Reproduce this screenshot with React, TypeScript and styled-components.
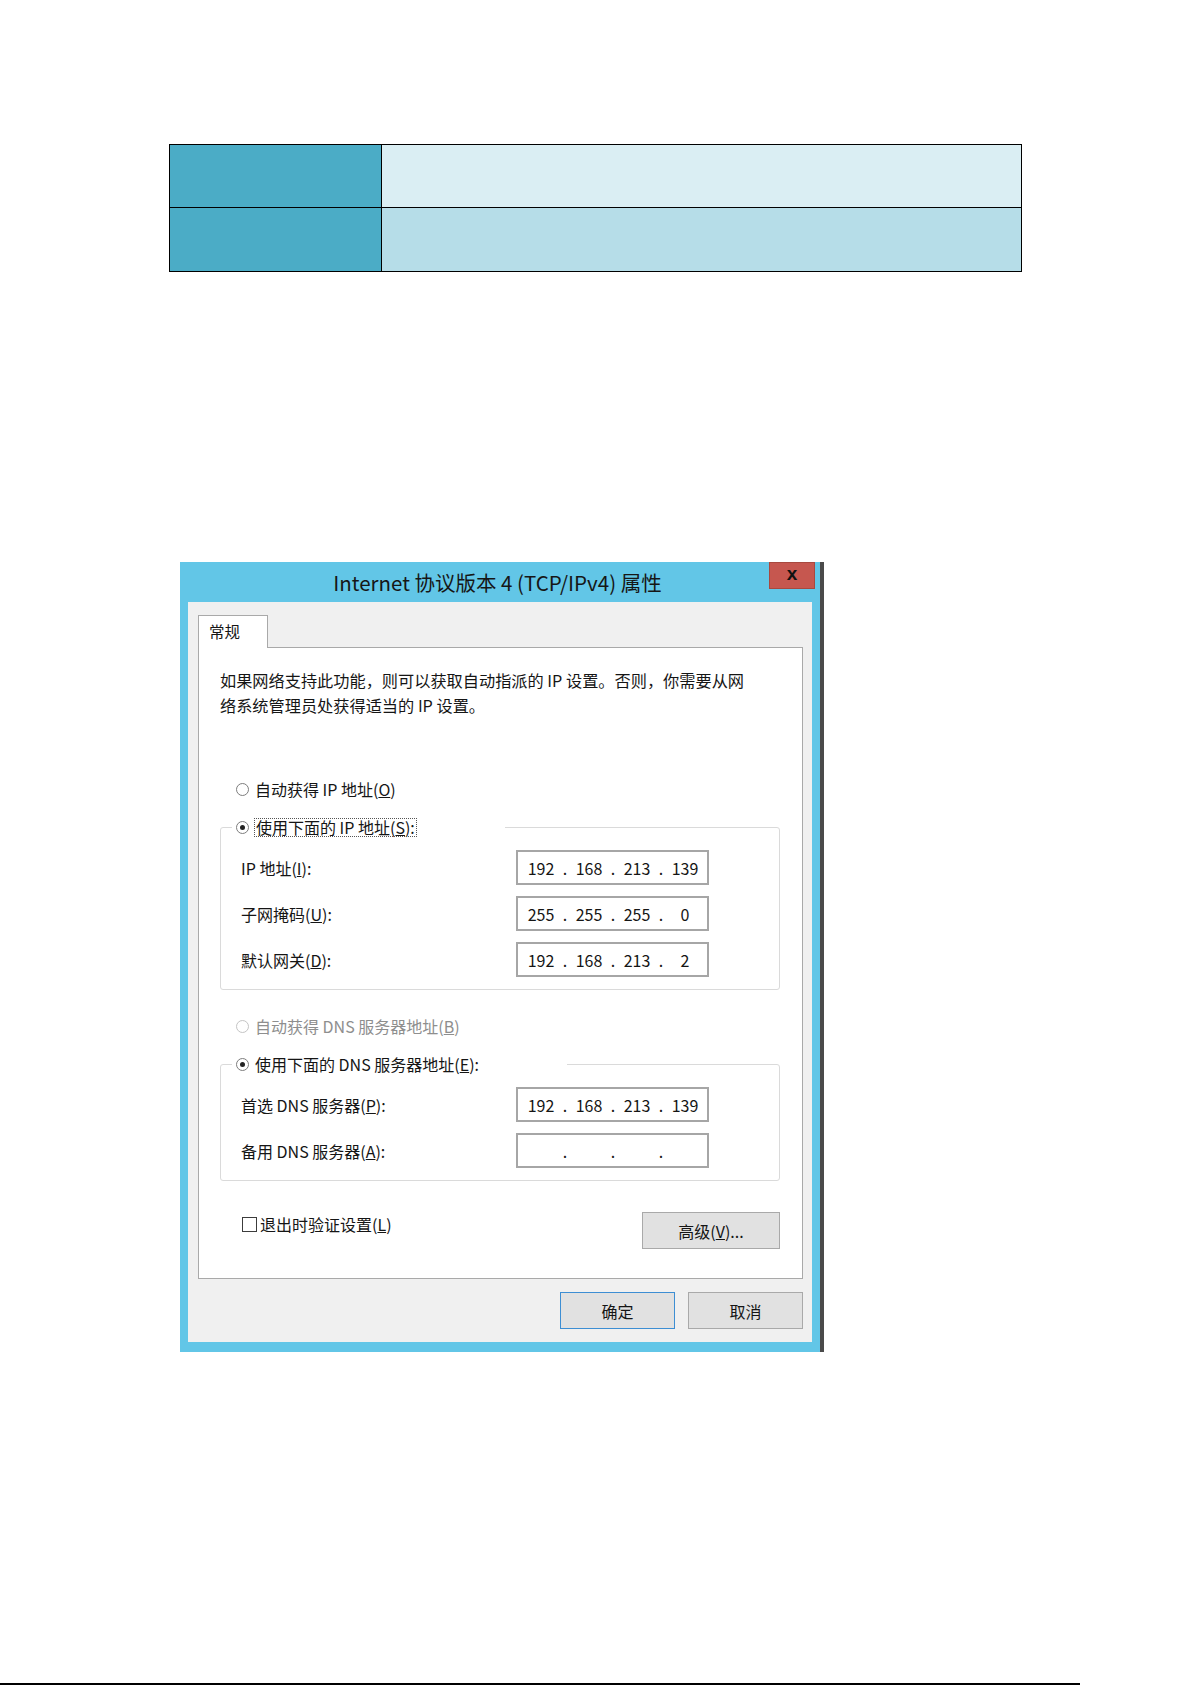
import React from "react";
import styled, { createGlobalStyle } from "styled-components";

const UI_FONT = `"Noto Sans CJK SC", "Noto Sans", sans-serif`;

const GlobalStyle = createGlobalStyle`
  html, body { margin: 0; padding: 0; background: #ffffff; }
  body { font-family: ${UI_FONT}; }
`;

const Page = styled.div`
  width: 1192px;
  height: 1685px;
  box-sizing: border-box;
  padding-top: 144px;
  display: flex;
  flex-direction: column;
  overflow: hidden;
`;

const InfoTable = styled.table`
  margin-left: 169px;
  width: 853px;
  border-collapse: collapse;
  table-layout: fixed;
`;

const Cell = styled.td<{ $bg: string; $h: number; $w?: number }>`
  background: ${(p) => p.$bg};
  border: 1px solid #000;
  height: ${(p) => p.$h}px;
  ${(p) => (p.$w ? `width: ${p.$w}px;` : "")}
  padding: 0;
`;

const Dialog = styled.div`
  margin: 290px 0 0 180px;
  width: 644px;
  box-sizing: border-box;
  background: #62c6e7;
  border-right: 4px solid #4a4a4a;
  font-family: ${UI_FONT};
  color: #151515;
`;

const TitleBar = styled.div`
  height: 40px;
  display: grid;
  grid-template-columns: 1fr auto 1fr;
  align-items: center;
  padding-right: 5px;
`;

const Title = styled.div`
  grid-column: 2;
  font-size: 20.5px;
  color: #161616;
  white-space: nowrap;
`;

const CloseButton = styled.div`
  grid-column: 3;
  justify-self: end;
  align-self: start;
  width: 46px;
  height: 27px;
  box-sizing: border-box;
  background: #c6574f;
  border: 1px solid #a8493f;
  display: flex;
  align-items: center;
  justify-content: center;
  font: bold 19px "Liberation Sans", sans-serif;
  color: #111;
  padding-bottom: 4px;
`;

const FrameBody = styled.div`
  padding: 0 8px 10px 8px;
`;

const Panel = styled.div`
  background: #f0f0f0;
  padding: 13px 9px 13px 10px;
`;

const TabStrip = styled.div`
  display: flex;
  height: 32px;
`;

const Tab = styled.div`
  position: relative;
  z-index: 1;
  width: 70px;
  height: 33px;
  box-sizing: border-box;
  border: 1px solid #a9a9a9;
  border-bottom: none;
  background: #fff;
  padding-left: 10px;
  font-size: 15.5px;
  line-height: 30px;
`;

const TabPanel = styled.div`
  height: 632px;
  box-sizing: border-box;
  background: #fff;
  border: 1px solid #a9a9a9;
  padding: 20px 22px 0 21px;
  display: flex;
  flex-direction: column;
`;

const Intro = styled.p`
  margin: 0;
  font-size: 16.2px;
  line-height: 25px;
  white-space: nowrap;
`;

const RadioRow = styled.div<{ $mt: number; $disabled?: boolean }>`
  margin-top: ${(p) => p.$mt}px;
  height: 24px;
  display: flex;
  align-items: center;
  gap: 6px;
  padding-left: 16px;
  font-size: 16px;
  color: ${(p) => (p.$disabled ? "#8e8e8e" : "#151515")};
`;

const RadioDot = styled.span<{ $checked?: boolean; $disabled?: boolean }>`
  width: 13px;
  height: 13px;
  box-sizing: border-box;
  border-radius: 50%;
  border: 1px solid ${(p) => (p.$disabled ? "#c4c4c4" : "#7d7d7d")};
  background: #fff;
  display: flex;
  align-items: center;
  justify-content: center;
  flex: none;
  &::after {
    content: "";
    width: 5px;
    height: 5px;
    border-radius: 50%;
    background: ${(p) => (p.$checked ? "#222" : "transparent")};
  }
`;

const FocusText = styled.span`
  outline: 1px dotted #555;
  line-height: 17px;
  padding: 0 1px;
`;

const Group = styled.fieldset`
  margin: 14px 0 0;
  padding: 11px 0 12px 0;
  border: 1px solid #dadada;
  border-radius: 3px;
  min-width: 0;
`;

const GroupLegend = styled.legend<{ $w: number }>`
  margin-left: 11px;
  padding: 0;
  width: ${(p) => p.$w}px;
  box-sizing: border-box;
`;

const LegendInner = styled.div`
  height: 24px;
  display: flex;
  align-items: center;
  gap: 6px;
  padding-left: 4px;
  font-size: 16px;
  color: #151515;
`;

const FieldGrid = styled.div`
  display: grid;
  grid-template-columns: 275px 193px;
  row-gap: 11px;
  align-items: center;
  padding-left: 20px;
`;

const FieldLabel = styled.span`
  font-size: 16px;
  color: #151515;
`;

const IpBox = styled.div`
  height: 35px;
  box-sizing: border-box;
  border: 2px solid #a6a6a6;
  background: #fff;
  display: flex;
  align-items: center;
  padding-left: 6px;
  font-size: 16px;
  color: #151515;
`;

const IpPart = styled.span`
  width: 34px;
  text-align: center;
`;

const IpDot = styled.span`
  width: 14px;
  text-align: center;
`;

const BottomRow = styled.div`
  margin-top: 31px;
  display: flex;
  justify-content: space-between;
  align-items: flex-start;
`;

const CheckLabel = styled.label`
  height: 24px;
  display: flex;
  align-items: center;
  gap: 3px;
  padding-left: 22px;
  font-size: 16px;
  color: #151515;
`;

const CheckBox = styled.span`
  width: 15px;
  height: 15px;
  box-sizing: border-box;
  border: 1px solid #3c3c3c;
  background: #fff;
`;

const PushButton = styled.button<{ $w: number; $default?: boolean }>`
  width: ${(p) => p.$w}px;
  height: 37px;
  box-sizing: border-box;
  background: #e1e1e1;
  border: 1px solid ${(p) => (p.$default ? "#3d8ed3" : "#a9a9a9")};
  font-family: ${UI_FONT};
  font-size: 16px;
  color: #151515;
  padding: 0;
`;

const DialogButtons = styled.div`
  margin-top: 13px;
  display: flex;
  justify-content: flex-end;
  gap: 13px;
`;

const Key = styled.span`
  text-decoration: underline;
`;

const FooterRule = styled.div`
  margin-top: auto;
  width: 1080px;
  height: 2px;
  background: #000;
`;

function IpField({ parts }: { parts: string[] }) {
  return (
    <IpBox>
      {parts.map((p, i) => (
        <React.Fragment key={i}>
          <IpPart>{p}</IpPart>
          {i < 3 && <IpDot>.</IpDot>}
        </React.Fragment>
      ))}
    </IpBox>
  );
}

export default function App() {
  return (
    <>
      <GlobalStyle />
      <Page>
        <InfoTable>
          <tbody>
            <tr>
              <Cell $bg="#4bacc6" $h={62} $w={211} />
              <Cell $bg="#daeef3" $h={62} />
            </tr>
            <tr>
              <Cell $bg="#4bacc6" $h={63} $w={211} />
              <Cell $bg="#b6dde8" $h={63} />
            </tr>
          </tbody>
        </InfoTable>

        <Dialog>
          <TitleBar>
            <Title>Internet 协议版本 4 (TCP/IPv4) 属性</Title>
            <CloseButton>x</CloseButton>
          </TitleBar>
          <FrameBody>
            <Panel>
              <TabStrip>
                <Tab>常规</Tab>
              </TabStrip>
              <TabPanel>
                <Intro>
                  如果网络支持此功能，则可以获取自动指派的 IP 设置。否则，你需要从网
                  <br />
                  络系统管理员处获得适当的 IP 设置。
                </Intro>

                <RadioRow $mt={59}>
                  <RadioDot />
                  <span>
                    自动获得 IP 地址(<Key>O</Key>)
                  </span>
                </RadioRow>

                <Group>
                  <GroupLegend $w={273}>
                    <LegendInner>
                      <RadioDot $checked />
                      <FocusText>
                        使用下面的 IP 地址(<Key>S</Key>):
                      </FocusText>
                    </LegendInner>
                  </GroupLegend>
                  <FieldGrid>
                    <FieldLabel>
                      IP 地址(<Key>I</Key>):
                    </FieldLabel>
                    <IpField parts={["192", "168", "213", "139"]} />
                    <FieldLabel>
                      子网掩码(<Key>U</Key>):
                    </FieldLabel>
                    <IpField parts={["255", "255", "255", "0"]} />
                    <FieldLabel>
                      默认网关(<Key>D</Key>):
                    </FieldLabel>
                    <IpField parts={["192", "168", "213", "2"]} />
                  </FieldGrid>
                </Group>

                <RadioRow $mt={24} $disabled>
                  <RadioDot $disabled />
                  <span>
                    自动获得 DNS 服务器地址(<Key>B</Key>)
                  </span>
                </RadioRow>

                <Group>
                  <GroupLegend $w={335}>
                    <LegendInner>
                      <RadioDot $checked />
                      <span>
                        使用下面的 DNS 服务器地址(<Key>E</Key>):
                      </span>
                    </LegendInner>
                  </GroupLegend>
                  <FieldGrid>
                    <FieldLabel>
                      首选 DNS 服务器(<Key>P</Key>):
                    </FieldLabel>
                    <IpField parts={["192", "168", "213", "139"]} />
                    <FieldLabel>
                      备用 DNS 服务器(<Key>A</Key>):
                    </FieldLabel>
                    <IpField parts={["", "", "", ""]} />
                  </FieldGrid>
                </Group>

                <BottomRow>
                  <CheckLabel>
                    <CheckBox />
                    <span>
                      退出时验证设置(<Key>L</Key>)
                    </span>
                  </CheckLabel>
                  <PushButton $w={138}>
                    高级(<Key>V</Key>)...
                  </PushButton>
                </BottomRow>
              </TabPanel>
              <DialogButtons>
                <PushButton $w={115} $default>
                  确定
                </PushButton>
                <PushButton $w={115}>取消</PushButton>
              </DialogButtons>
            </Panel>
          </FrameBody>
        </Dialog>

        <FooterRule />
      </Page>
    </>
  );
}
